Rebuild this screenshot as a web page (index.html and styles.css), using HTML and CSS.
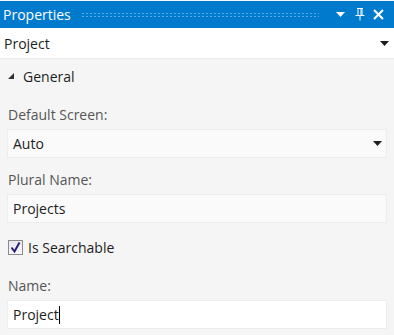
FILE: index.html
```html
<!DOCTYPE html>
<html lang="en">
<head>
  <meta charset="UTF-8">
  <title>Properties</title>
  <link rel="stylesheet" href="styles.css">
</head>
<body>

  <div class="panel">
    <div class="titlebar">
      <span class="title">Properties</span>
      <span class="grip"></span>
      <span class="tool">
        <svg width="9" height="6" viewBox="0 0 9 6"><path d="M0 0h9L4.5 5z" fill="#fff"/></svg>
      </span>
      <span class="tool">
        <svg width="10" height="13" viewBox="0 0 10 13"><path d="M2 0.5h6M3 0.5v7M7 0.5v7M6 0.5v7M0.5 7.5h9M5 7.5v5" stroke="#fff" stroke-width="1" fill="none"/></svg>
      </span>
      <span class="tool">
        <svg width="11" height="11" viewBox="0 0 11 11"><path d="M1 1l9 9M10 1l-9 9" stroke="#fff" stroke-width="2"/></svg>
      </span>
    </div>

    <div class="object-row">
      <span>Project</span>
      <svg width="9" height="5" viewBox="0 0 9 5"><path d="M0 0h9L4.5 5z" fill="#1e1e1e"/></svg>
    </div>

    <div class="body">
      <div class="group">
        <svg width="6" height="6" viewBox="0 0 6 6"><path d="M6 0v6H0z" fill="#333"/></svg>
        <span>General</span>
      </div>

      <div class="field">
        <label class="label">Default Screen:</label>
        <div class="box combo">
          <span>Auto</span>
          <svg width="9" height="5" viewBox="0 0 9 5"><path d="M0 0h9L4.5 5z" fill="#1e1e1e"/></svg>
        </div>
      </div>

      <div class="field">
        <label class="label">Plural Name:</label>
        <div class="box">Projects</div>
      </div>

      <div class="check-row">
        <span class="check">
          <svg width="11" height="11" viewBox="0 0 11 11"><path d="M1.5 5.5l3 4L9.5 0.5" stroke="#2a1f6e" stroke-width="2" fill="none"/></svg>
        </span>
        <span>Is Searchable</span>
      </div>

      <div class="field">
        <label class="label">Name:</label>
        <div class="box active">Project<span class="caret"></span></div>
      </div>
    </div>
  </div>

</body>
</html>
```

FILE: styles.css
```css
body {
  margin: 0;
  font-family: "Open Sans", "Noto Sans", sans-serif;
  font-size: 14px;
  color: #1e1e1e;
  background: #f5f5f5;
}

.panel {
  width: 394px;
  height: 335px;
  background: #f5f5f5;
}

.titlebar {
  display: flex;
  align-items: center;
  height: 27px;
  margin-top: 1px;
  padding: 0 6px 0 3px;
  background: #007acc;
  color: #fff;
}

.title {
  font-size: 14px;
}

.grip {
  flex: 1;
  height: 5px;
  margin: 0 12px 0 10px;
  background-image: radial-gradient(circle, #5aa9e6 0.8px, transparent 1px);
  background-size: 4px 3px;
}

.tool {
  display: flex;
  align-items: center;
  justify-content: center;
  width: 19px;
  height: 20px;
}

.object-row {
  display: flex;
  align-items: center;
  justify-content: space-between;
  height: 29px;
  padding: 1px 5px 0 4px;
  background: #fff;
  border-bottom: 1px solid #ececec;
}

.body {
  padding: 0 7px;
}

.group {
  display: flex;
  align-items: center;
  gap: 9px;
  height: 34px;
  padding-left: 1px;
}

.field {
  display: flex;
  flex-direction: column;
}

.label {
  color: #555;
  padding: 12px 0 5px 1px;
}

.box {
  display: flex;
  align-items: center;
  height: 27px;
  padding: 0 5px;
  background: #fafafa;
  border: 1px solid #ededed;
}

.combo {
  justify-content: space-between;
  padding-right: 4px;
}

.box.active {
  background: #fff;
}

.caret {
  width: 1px;
  height: 18px;
  background: #000;
}

.check-row {
  display: flex;
  align-items: center;
  gap: 5px;
  height: 34px;
  margin-top: 7px;
  padding-left: 1px;
}

.check {
  display: flex;
  align-items: center;
  justify-content: center;
  width: 13px;
  height: 13px;
  border: 1px solid #8a8a8a;
  background: linear-gradient(#e8e8f0, #f8f8fb);
}
```
